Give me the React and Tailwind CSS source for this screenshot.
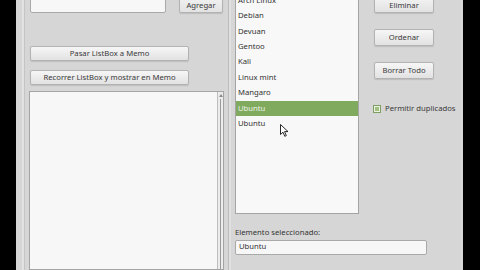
import React from 'react';

const font = { fontFamily: '"Noto Sans", "Open Sans", sans-serif' };

const Btn = ({ className = '', children }) => (
  <button
    type="button"
    className={`flex items-center justify-center rounded-[2px] border border-[#b3b3b3] bg-gradient-to-b from-[#f6f6f6] to-[#e2e2e2] text-[7.7px] leading-none text-[#3a3a3a] shadow-[0_1px_1px_rgba(0,0,0,0.12)] ${className}`}
  >
    {children}
  </button>
);

const items = ['Arch Linux', 'Debian', 'Devuan', 'Gentoo', 'Kali', 'Linux mint', 'Mangaro', 'Ubuntu', 'Ubuntu'];

export default function App() {
  return (
    <div className="flex h-[270px] w-[480px] overflow-hidden bg-black" style={font}>
      <div className="w-[16px] shrink-0 bg-black" />

      <div className="flex w-[447px] shrink-0 bg-[#d6d6d6]">
        {/* frame edge */}
        <div className="ml-[6px] w-[2px] shrink-0 bg-[#e2e2e2]" />
        <div className="w-[1px] shrink-0 bg-[#c4c4c4]" />

        {/* left panel */}
        <div className="ml-[4px] flex w-[196px] shrink-0 flex-col">
          <div className="mt-[-7px] flex items-start">
            <div className="ml-[1px] h-[20px] w-[136px] rounded-[2px] border border-[#a9a9a9] bg-[#f7f7f7]" />
            <Btn className="ml-[13px] h-[20px] w-[44px] pt-[6px]">Agregar</Btn>
          </div>
          <Btn className="ml-[1px] mt-[33px] h-[16px] w-[159px]">Pasar ListBox a Memo</Btn>
          <Btn className="ml-[1px] mt-[9px] h-[16px] w-[159px]">Recorrer ListBox y mostrar en Memo</Btn>
          <div className="mt-[6px] flex h-[190px] w-[195px] border border-[#a4a4a4] bg-[#f7f7f7]">
            <div className="flex-1" />
            <div className="flex w-[6px] flex-col items-center border-l border-[#bdbdbd] bg-[#ececec]">
              <div className="mt-[2px] h-0 w-0 border-x-[2px] border-b-[3px] border-x-transparent border-b-[#8a8a8a]" />
              <div className="mt-[2px] w-[1px] flex-1 bg-[#9a9a9a]" />
            </div>
          </div>
        </div>

        <div className="ml-[3px] w-[1px] shrink-0 bg-[#bcbcbc]" />
        <div className="w-[2px] shrink-0 bg-[#e0e0e0]" />

        {/* right panel */}
        <div className="ml-[4px] flex w-[226px] shrink-0 flex-col">
          <div className="flex">
            <div className="relative mt-[-8px] h-[222px] w-[124px] overflow-hidden border border-[#a4a4a4] bg-[#f8f8f8]">
              {items.map((t, i) => (
                <div
                  key={i}
                  className={`flex h-[15.4px] items-center pl-[2px] text-[7.7px] ${
                    i === 7 ? 'bg-[#80aa5e] text-[#eef4e8]' : 'text-[#333]'
                  }`}
                >
                  {t}
                </div>
              ))}
              <svg className="absolute left-[44px] top-[131px]" width="9" height="13" viewBox="0 0 9 13">
                <path d="M0.5 0.5 L0.5 10.5 L3 8.2 L4.8 12.3 L6.3 11.6 L4.6 7.6 L8 7.6 Z" fill="#fff" stroke="#111" strokeWidth="0.9" />
              </svg>
            </div>
            <div className="ml-[15px] flex flex-col">
              <Btn className="mt-[-6px] h-[19px] w-[60px] pt-[5px]">Eliminar</Btn>
              <Btn className="mt-[16px] h-[17px] w-[60px]">Ordenar</Btn>
              <Btn className="mt-[16px] h-[17px] w-[60px]">Borrar Todo</Btn>
              <div className="ml-[-1px] mt-[24px] flex items-center">
                <div className="flex h-[8px] w-[8px] items-center justify-center border border-[#7d9f63] bg-[#eaf1e2]">
                  <div className="h-[4px] w-[4px] bg-[#9fc07f]" />
                </div>
                <span className="ml-[4px] text-[7.7px] text-[#3a3a3a]">Permitir duplicados</span>
              </div>
            </div>
          </div>
          <div className="mt-[15px] text-[7.7px] leading-none text-[#333]">Elemento seleccionado:</div>
          <div className="mt-[3px] flex h-[15px] w-[192px] items-center rounded-[2px] border border-[#a9a9a9] bg-[#f7f7f7] pl-[3px] text-[7.7px] text-[#333]">
            Ubuntu
          </div>
        </div>
      </div>

      <div className="flex-1 bg-black" />
    </div>
  );
}
